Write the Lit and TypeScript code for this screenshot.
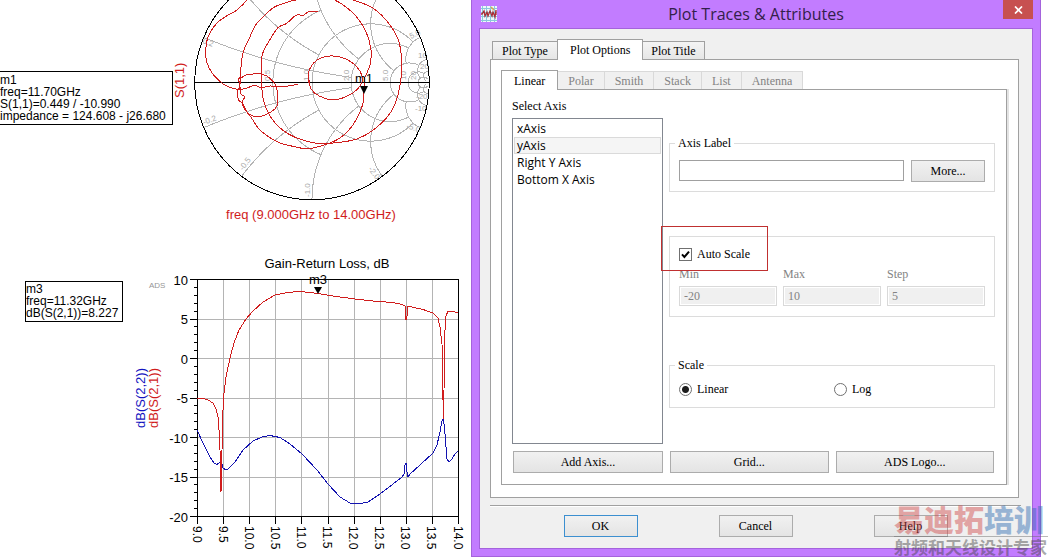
import { LitElement, html, svg, css } from "lit";
import { customElement, state } from "lit/decorators.js";

type Point = [number, number];

/** Smooth curve through the points (Catmull-Rom turned into Béziers). */
function smooth(points: Point[]): string {
  let d = `M${points[0][0]} ${points[0][1]}`;
  for (let i = 0; i < points.length - 1; i++) {
    const p0 = points[Math.max(i - 1, 0)];
    const p1 = points[i];
    const p2 = points[i + 1];
    const p3 = points[Math.min(i + 2, points.length - 1)];
    const c1 = [p1[0] + (p2[0] - p0[0]) / 6, p1[1] + (p2[1] - p0[1]) / 6];
    const c2 = [p2[0] - (p3[0] - p1[0]) / 6, p2[1] - (p3[1] - p1[1]) / 6];
    d += `C${c1.map((v) => v.toFixed(2)).join(" ")} ${c2.map((v) => v.toFixed(2)).join(" ")} ${p2[0]} ${p2[1]}`;
  }
  return d;
}

const CX = 312;
const CY = 82.5;
const R = 117.3;

/** Reflection coefficient of a normalised impedance, in chart coordinates. */
function gamma(r: number, x: number): Point {
  const den = (r + 1) * (r + 1) + x * x;
  return [CX + (R * (r * r - 1 + x * x)) / den, CY - (R * 2 * x) / den];
}

function polyline(points: Point[]): string {
  return points.map((p) => p.map((v) => v.toFixed(2)).join(",")).join(" ");
}

/** Constant resistance line, limited to |x| <= limit. */
function resistance(r: number, limit: number): string {
  const end = Math.atan(limit);
  const pts: Point[] = [];
  for (let i = -60; i <= 60; i++) pts.push(gamma(r, Math.tan((end * i) / 60)));
  return polyline(pts);
}

/** Constant reactance line, from the rim up to r = limit. */
function reactance(x: number, limit: number): string {
  const end = Math.atan(limit);
  const pts: Point[] = [];
  for (let i = 0; i <= 50; i++) pts.push(gamma(Math.tan((end * i) / 50), x));
  return polyline(pts);
}

const RESISTANCES: Point[] = [[0.5, 1], [1, 5], [2, 5], [5, 10], [10, 20], [20, 50]];
const REACTANCES: Point[] = [[0.2, 2], [0.5, 1], [1, 2], [2, 5], [5, 5], [10, 20], [20, 50]];

const S11: Point[][] = [
  [[172, -2], [160, 12], [137, 33], [110, 48], [82, 68], [62, 95], [50, 125], [48, 175], [58, 205], [75, 230], [100, 252], [125, 264], [148, 268], [172, 264], [192, 256], [215, 263], [240, 258], [270, 261], [300, 257], [325, 253]],
  [[325, -2], [290, 7], [252, 22], [222, 48], [196, 76], [178, 115], [160, 155], [153, 200], [151, 235], [150, 260], [153, 282], [165, 290], [157, 305], [162, 325], [178, 345], [190, 362], [205, 385], [235, 410], [265, 427], [300, 437], [350, 446], [400, 436], [450, 414], [485, 380], [510, 335], [521, 300], [522, 262], [524, 235], [540, 195], [543, 150], [528, 95], [495, 45], [455, 12], [430, -2]],
  [[385, 34], [355, 36], [340, 46], [318, 46], [290, 70], [265, 82], [245, 110], [218, 160], [215, 200], [215, 250], [220, 300], [240, 348], [275, 388], [320, 414], [380, 430], [440, 428], [500, 417], [550, 390], [600, 340], [624, 285], [635, 210], [628, 130], [600, 75], [550, 25], [485, -2]],
  [[357, 250], [355, 220], [370, 190], [395, 173], [430, 168], [470, 178], [500, 200], [516, 228], [512, 255], [480, 284], [430, 300], [388, 288], [364, 268], [357, 240]],
  [[149, 238], [165, 226], [190, 222], [218, 223], [240, 235], [258, 258], [263, 290], [261, 318], [243, 336], [215, 348], [190, 348], [170, 335], [158, 310], [146, 300], [143, 275], [150, 258], [146, 240], [149, 232]],
];

const SMITH_LABELS: { x: number; y: number; a: number; t: string }[] = [
  { x: 202, y: 43, a: 20, t: "0.2" },
  { x: 204, y: 125, a: -20, t: "-0.2" },
  { x: 243, y: 171, a: -53, t: "-0.5" },
  { x: 310, y: 197, a: -90, t: "-1.0" },
  { x: 368, y: 169, a: 53, t: "-2.0" },
  { x: 406, y: 128, a: 18, t: "-5.0" },
  { x: 411, y: 39, a: -25, t: "5.0" },
  { x: 418, y: 58, a: 0, t: "10" },
  { x: 420, y: 69, a: 0, t: "20" },
  { x: 416, y: 99, a: 0, t: "-20" },
  { x: 415, y: 111, a: 0, t: "-10" },
  { x: 270, y: 81, a: -90, t: "0.5" },
  { x: 309, y: 81, a: -90, t: "1.0" },
  { x: 349, y: 81, a: -90, t: "2.0" },
  { x: 388, y: 81, a: -90, t: "5.0" },
  { x: 406, y: 80, a: -90, t: "10" },
  { x: 416, y: 80, a: -90, t: "20" },
];

const LEFT = 197.5;
const RIGHT = 458.5;
const TOP = 279.5;
const BOTTOM = 516.5;

const GAIN: Point[] = [
  [197, 398.5], [203, 398.5], [208, 400], [213, 403], [216, 409], [218, 417], [219, 430], [220, 450], [221, 492], [222, 450], [223, 410], [224, 393], [226, 377], [230, 358], [234, 343], [239, 330], [246, 319], [253, 311], [263, 302], [275, 295], [287, 292.5], [300, 291.5], [305, 292], [318, 293.5], [333, 296], [355, 299], [373, 301], [393, 302.5], [402, 304.5], [405, 306], [406, 320], [407, 316], [408, 306], [412, 307], [423, 309.5], [433, 313], [438, 318], [440, 327], [442, 344], [442.5, 364], [443, 400], [443.3, 419], [444, 390], [444.5, 357], [445, 330], [446, 316], [448, 311], [453, 311.5], [458, 313],
];
const RETURN_LOSS: Point[] = [
  [197, 430], [203, 443], [210, 457], [214, 463], [217, 464.5], [220, 462], [221, 460], [222, 464], [223, 468], [225, 469.5], [228, 469], [235, 462], [243, 450], [253, 441], [262, 437], [270, 435.5], [280, 437.5], [290, 444], [302, 454], [317, 470], [328, 484], [340, 497], [350, 503], [358, 504], [368, 502], [380, 494], [393, 484], [402, 477], [404, 474], [405, 465], [406, 463], [407, 472], [408, 477], [410, 474], [420, 465], [433, 453], [437, 445], [440, 432], [442, 421], [443, 419], [444.5, 427], [446, 447], [447, 459], [449, 462], [452, 459], [455, 454], [458, 451],
];

@customElement("smith-chart")
class SmithChart extends LitElement {
  static styles = css`
    :host { display: block; }
    svg { display: block; font-family: "Liberation Sans", Arial, sans-serif; }
    .grid { fill: none; stroke: #b4b4b4; shape-rendering: crispEdges; }
    .rim { fill: none; stroke: #000; shape-rendering: crispEdges; }
    .trace { fill: none; stroke: #d01c1c; vector-effect: non-scaling-stroke; shape-rendering: crispEdges; }
    .tick { font-size: 8px; fill: #a8a8a8; }
    .red { font-size: 13px; fill: #d01c1c; }
    .marker { font-size: 13px; fill: #000; }
  `;

  render() {
    return html`<svg width="298" height="237" viewBox="173 0 298 237" role="img" aria-label="Smith chart of S(1,1)">
      <g class="grid">
        ${RESISTANCES.map(([r, limit]) => svg`<polyline points=${resistance(r, limit)} />`)}
        ${REACTANCES.map(([x, limit]) => svg`<polyline points=${reactance(x, limit)} /><polyline points=${reactance(-x, limit)} />`)}
      </g>
      ${SMITH_LABELS.map((l) => svg`<text class="tick" transform="translate(${l.x} ${l.y}) rotate(${l.a})">${l.t}</text>`)}
      <circle class="rim" cx=${CX} cy=${CY} r=${R} />
      <path class="rim" d="M194 82.5H430" />
      <g transform="translate(190 0) scale(0.33333)">
        ${S11.map((t) => svg`<path class="trace" d=${smooth(t)} />`)}
      </g>
      <text class="marker" x="355" y="83">m1</text>
      <path d="M360 86H368L364 94Z" />
      <text class="red" transform="translate(184 98) rotate(-90)">S(1,1)</text>
      <text class="red" x="311" y="219" text-anchor="middle">freq (9.000GHz to 14.00GHz)</text>
    </svg>`;
  }
}

@customElement("gain-chart")
class GainChart extends LitElement {
  static styles = css`
    :host { display: block; }
    svg { display: block; font-family: "Liberation Sans", Arial, sans-serif; }
    .grid { fill: none; stroke: #b4b4b4; shape-rendering: crispEdges; }
    .axis { fill: none; stroke: #000; shape-rendering: crispEdges; }
    .gain { fill: none; stroke: #d01c1c; shape-rendering: crispEdges; }
    .loss { fill: none; stroke: #1414b0; shape-rendering: crispEdges; }
    .label { font-size: 13px; fill: #000; }
    .freq { font-size: 12px; fill: #000; }
    .redtext { font-size: 13px; fill: #d01c1c; }
    .bluetext { font-size: 13px; fill: #1414c0; }
    .logo { font-size: 8px; fill: #969696; }
  `;

  render() {
    const xs = Array.from({ length: 11 }, (_, i) => LEFT + ((RIGHT - LEFT) * i) / 10);
    const ys = Array.from({ length: 7 }, (_, i) => TOP + ((BOTTOM - TOP) * i) / 6);
    const minor = Array.from({ length: 31 }, (_, i) => TOP + ((BOTTOM - TOP) * i) / 30);
    return html`<svg width="348" height="320" viewBox="123 237 348 320" role="img" aria-label="Gain-Return Loss, dB">
      <g class="grid">
        ${xs.map((x) => svg`<path d="M${x} ${TOP}V${BOTTOM}" />`)}
        ${ys.map((y) => svg`<path d="M${LEFT} ${y}H${RIGHT}" />`)}
      </g>
      <g class="axis">
        <rect x=${LEFT} y=${TOP} width=${RIGHT - LEFT} height=${BOTTOM - TOP} />
        ${ys.map((y) => svg`<path d="M190 ${y}H${LEFT}" />`)}
        ${minor.map((y) => svg`<path d="M194 ${y}H${LEFT}" />`)}
        ${xs.map((x) => svg`<path d="M${x} ${BOTTOM}V524" />`)}
      </g>
      <polyline class="loss" points=${polyline(RETURN_LOSS)} />
      <polyline class="gain" points=${polyline(GAIN)} />
      ${ys.map((y, i) => svg`<text class="label" x="188" y=${y + 5} text-anchor="end">${10 - 5 * i}</text>`)}
      ${xs.map((x, i) => svg`<text class="freq" transform="translate(${x - 5} 526) rotate(90)">${(9 + i / 2).toFixed(1)}</text>`)}
      <text class="label" x="327" y="268" text-anchor="middle">Gain-Return Loss, dB</text>
      <text class="label" x="309" y="284">m3</text>
      <path d="M314 287H322L318 294Z" />
      <text class="logo" x="149" y="288">ADS</text>
      <text class="bluetext" transform="translate(145 428) rotate(-90)">dB(S(2,2))</text>
      <text class="redtext" transform="translate(158 428) rotate(-90)">dB(S(2,1))</text>
    </svg>`;
  }
}

@customElement("plot-dialog")
class PlotDialog extends LitElement {
  @state() private axis = "yAxis";

  static styles = css`
    :host { display: block; font: 12px/16px "Liberation Serif", "Times New Roman", serif; color: #000; }
    * { box-sizing: border-box; }
    button, input { font: inherit; color: inherit; margin: 0; }
    .window { background: #c27cff; border: 1px solid #a463dc; border-top: 0; padding: 0 7px 7px; }
    .titlebar { display: grid; grid-template-columns: 30px 1fr 30px; height: 28px; }
    .appicon { display: block; margin: 6px 0 0 2px; }
    .title { margin: 0; font: 16px/28px "Open Sans", "Noto Sans", sans-serif; color: #33204a; text-align: center; }
    .close { width: 30px; height: 19px; border: 0; padding: 0; background: #c75050; display: grid; place-items: center; }
    .body { background: #f0f0f0; border: 1px solid #a463dc; padding: 10px 0 11px; }
    .tabs { display: flex; align-items: flex-end; position: relative; }
    .tab { height: 18px; padding: 0 8px; border: 1px solid #a0a0a0; border-bottom: 0; background: linear-gradient(#f4f4f4, #e6e6e6); }
    .tab + .tab { border-left: 0; }
    .outer { padding: 0 2px; margin: 0 13px 0 10px; }
    .outer .current { padding: 0 12px; margin-bottom: -1px; height: 21px; background: #fff; border-left: 1px solid #a0a0a0; }
    .outer .before { border-right: 0; padding: 0 9px; }
    .page { background: #fff; border: 1px solid #a0a0a0; margin: 0 13px 0 10px; padding: 10px 11px 12px 10px; }
    .inner .tab { height: 18px; padding: 0 10px; }
    .inner .tab:disabled { color: #838383; background: #f0f0f0; border-color: #d9d9d9; }
    .inner .current { height: 20px; padding: 0 12px; margin-bottom: -1px; background: #fff; position: relative; }
    .subpage { border: 1px solid #a0a0a0; box-shadow: 2px 0 0 #e3e3e3; padding: 8px 12px 11px 11px; }
    .columns { display: grid; grid-template-columns: 150px 1fr; column-gap: 6px; margin-top: 4px; }
    .caption { margin: 0 0 0 -1px; }
    .axes { list-style: none; margin: 0 0 0 -1px; padding: 1px; width: 151px; height: 326px; border: 1px solid #828790; font: 12px/17px "Open Sans", "Noto Sans", sans-serif; }
    .axis { padding: 0 2px; height: 17px; border: 1px solid transparent; line-height: 15px; cursor: default; }
    .axis.selected { background: #f5f5f5; border-color: #dadada; }
    .groups { display: flex; flex-direction: column; padding-top: 17px; margin-right: -1px; }
    fieldset { position: relative; margin: 0; min-width: 0; border: 1px solid #dcdcdc; padding: 0 9px; }
    legend { padding: 0 3px; margin-left: -4px; }
    .labelgroup { height: 57px; }
    .labelrow { display: grid; grid-template-columns: 1fr 74px; gap: 7px; padding-top: 9px; }
    .field { width: 100%; min-width: 0; height: 21px; padding: 0 4px; border: 1px solid #a0a0a0; background: #fff; }
    .field:disabled { height: 20px; color: #838383; background: #f0f0f0; border-color: #d9d9d9; box-shadow: inset 0 0 0 1px #fff; -webkit-text-fill-color: #838383; }
    .button { height: 22px; padding: 0; border: 1px solid #acacac; background: linear-gradient(#f1f1f1, #e4e4e4); text-align: center; }
    .button.default { border-color: #3c8fd0; }
    .autogroup { height: 81px; margin-top: 44px; }
    .check { display: flex; align-items: center; gap: 5px; padding-top: 9px; }
    .check input { appearance: none; width: 13px; height: 13px; border: 1px solid #707070; background: #fff; }
    .check input:checked { background: #fff url("data:image/svg+xml,%3Csvg xmlns='http://www.w3.org/2000/svg' viewBox='0 0 11 11'%3E%3Cpath d='M2 5.4L4.4 8L9 2.6' fill='none' stroke='%23000' stroke-width='2'/%3E%3C/svg%3E") center / 11px no-repeat; }
    .ranges { display: grid; grid-template-columns: repeat(3, 1fr); column-gap: 6px; padding-top: 4px; color: #838383; }
    .range { display: grid; row-gap: 4px; }
    .highlight { position: absolute; left: -9px; top: -11px; width: 107px; height: 45px; border: 1px solid #c03030; pointer-events: none; }
    .scalegroup { height: 51px; margin-top: 40px; }
    .radios { display: grid; grid-template-columns: 1fr 1fr; column-gap: 4px; padding-top: 8px; }
    .radio { display: flex; align-items: center; gap: 5px; }
    .radio input { appearance: none; width: 13px; height: 13px; border: 1px solid #707070; border-radius: 50%; background: #fff; }
    .radio input:checked { background: radial-gradient(circle, #1c1c1c 3px, #fff 4px); }
    .actions { display: grid; grid-template-columns: 150px 1fr 1fr; gap: 7px; margin-top: 7px; }
    .footer { display: flex; justify-content: center; gap: 81px; border-top: 1px solid #a0a0a0; box-shadow: inset 0 1px 0 #fff; margin: 7px 11px 0 10px; padding-top: 9px; }
    .footer .button { width: 74px; }
  `;

  render() {
    const axes = ["xAxis", "yAxis", "Right Y Axis", "Bottom X Axis"];
    return html`<section class="window" role="dialog" aria-labelledby="title">
      <header class="titlebar">
        <svg class="appicon" width="16" height="16" viewBox="0 0 16 16" aria-hidden="true">
          <rect width="16" height="16" fill="#eef8fb" />
          <path d="M1.5 0V16M5.5 0V16M9.5 0V16M13.5 0V16M0 2.5H16M0 6.5H16M0 10.5H16M0 14.5H16" stroke="#8cc8dc" />
          <path d="M0 8H1L3 5L4 10L6 6L7 10L9 5L11 10L12 6L14 11L15 4V9" fill="none" stroke="#a82c34" stroke-width="1.3" />
          <path d="M10 1L13 4" stroke="#d8a850" stroke-width="1.5" />
        </svg>
        <h1 class="title" id="title">Plot Traces &amp; Attributes</h1>
        <button class="close" aria-label="Close">
          <svg width="9" height="8" viewBox="0 0 9 8"><path d="M1 .5L8 7.5M8 .5L1 7.5" stroke="#fff" stroke-width="1.7" /></svg>
        </button>
      </header>
      <div class="body">
        <div class="tabs outer" role="tablist">
          <button class="tab before" role="tab">Plot Type</button>
          <button class="tab current" role="tab" aria-selected="true">Plot Options</button>
          <button class="tab" role="tab">Plot Title</button>
        </div>
        <div class="page">
          <div class="tabs inner" role="tablist">
            <button class="tab current" role="tab" aria-selected="true">Linear</button>
            ${["Polar", "Smith", "Stack", "List", "Antenna"].map((t) => html`<button class="tab" role="tab" disabled>${t}</button>`)}
          </div>
          <div class="subpage">
            <p class="caption" id="axes">Select Axis</p>
            <div class="columns">
              <ul class="axes" role="listbox" aria-labelledby="axes">
                ${axes.map((a) => html`<li class="axis ${a === this.axis ? "selected" : ""}" role="option" aria-selected=${a === this.axis} @click=${() => (this.axis = a)}>${a}</li>`)}
              </ul>
              <div class="groups">
                <fieldset class="labelgroup">
                  <legend>Axis Label</legend>
                  <div class="labelrow">
                    <input class="field" type="text" aria-label="Axis Label" />
                    <button class="button">More...</button>
                  </div>
                </fieldset>
                <fieldset class="autogroup">
                  <label class="check"><input type="checkbox" checked />Auto Scale</label>
                  <div class="ranges">
                    <label class="range">Min<input class="field" value="-20" disabled /></label>
                    <label class="range">Max<input class="field" value="10" disabled /></label>
                    <label class="range">Step<input class="field" value="5" disabled /></label>
                  </div>
                  <div class="highlight"></div>
                </fieldset>
                <fieldset class="scalegroup">
                  <legend>Scale</legend>
                  <div class="radios">
                    <label class="radio"><input type="radio" name="scale" checked />Linear</label>
                    <label class="radio"><input type="radio" name="scale" />Log</label>
                  </div>
                </fieldset>
              </div>
            </div>
            <div class="actions">
              <button class="button">Add Axis...</button>
              <button class="button">Grid...</button>
              <button class="button">ADS Logo...</button>
            </div>
          </div>
        </div>
        <footer class="footer">
          <button class="button default">OK</button>
          <button class="button">Cancel</button>
          <button class="button">Help</button>
        </footer>
      </div>
    </section>`;
  }
}

@customElement("app-root")
class AppRoot extends LitElement {
  static styles = css`
    :host { display: block; background: #fff; }
    .desktop { display: flex; position: relative; overflow: hidden; min-height: 100vh; }
    .display { flex: none; }
    .row { display: flex; align-items: flex-start; }
    .readout { box-sizing: border-box; margin: 0; border: 1px solid #000; font: 12px/12px "Liberation Sans", Arial, sans-serif; color: #000; white-space: nowrap; }
    .readout p { margin: 0; }
    .first { width: 173px; margin-top: 71px; padding: 2px 0 2px; border-left: 0; }
    .second { width: 98px; margin: 44px 0 0 25px; padding: 1px 0 2px; }
    .dialog { flex: 1; min-width: 0; margin-right: 7px; }
    .watermark { position: absolute; right: 0; bottom: 0; width: 154px; font-family: "Noto Sans CJK SC", sans-serif; white-space: nowrap; pointer-events: none; opacity: 0.45; }
    .brand { margin: 0; padding-bottom: 3px; font-size: 30px; line-height: 30px; font-weight: 900; color: #d04848; border-bottom: 1px solid #666; }
    .blue { color: #2c6ab0; }
    .motto { margin: 0; padding-bottom: 1px; font-size: 17px; line-height: 19px; font-weight: 700; color: #444; }
  `;

  render() {
    return html`<main class="desktop">
      <div class="display">
        <div class="row">
          <div class="readout first">
            <p>m1</p>
            <p>freq=11.70GHz</p>
            <p>S(1,1)=0.449 / -10.990</p>
            <p>impedance = 124.608 - j26.680</p>
          </div>
          <smith-chart></smith-chart>
        </div>
        <div class="row">
          <div class="readout second">
            <p>m3</p>
            <p>freq=11.32GHz</p>
            <p>dB(S(2,1))=8.227</p>
          </div>
          <gain-chart></gain-chart>
        </div>
      </div>
      <plot-dialog class="dialog"></plot-dialog>
      <div class="watermark">
        <p class="brand">易迪拓<span class="blue">培训</span></p>
        <p class="motto">射频和天线设计专家</p>
      </div>
    </main>`;
  }
}
